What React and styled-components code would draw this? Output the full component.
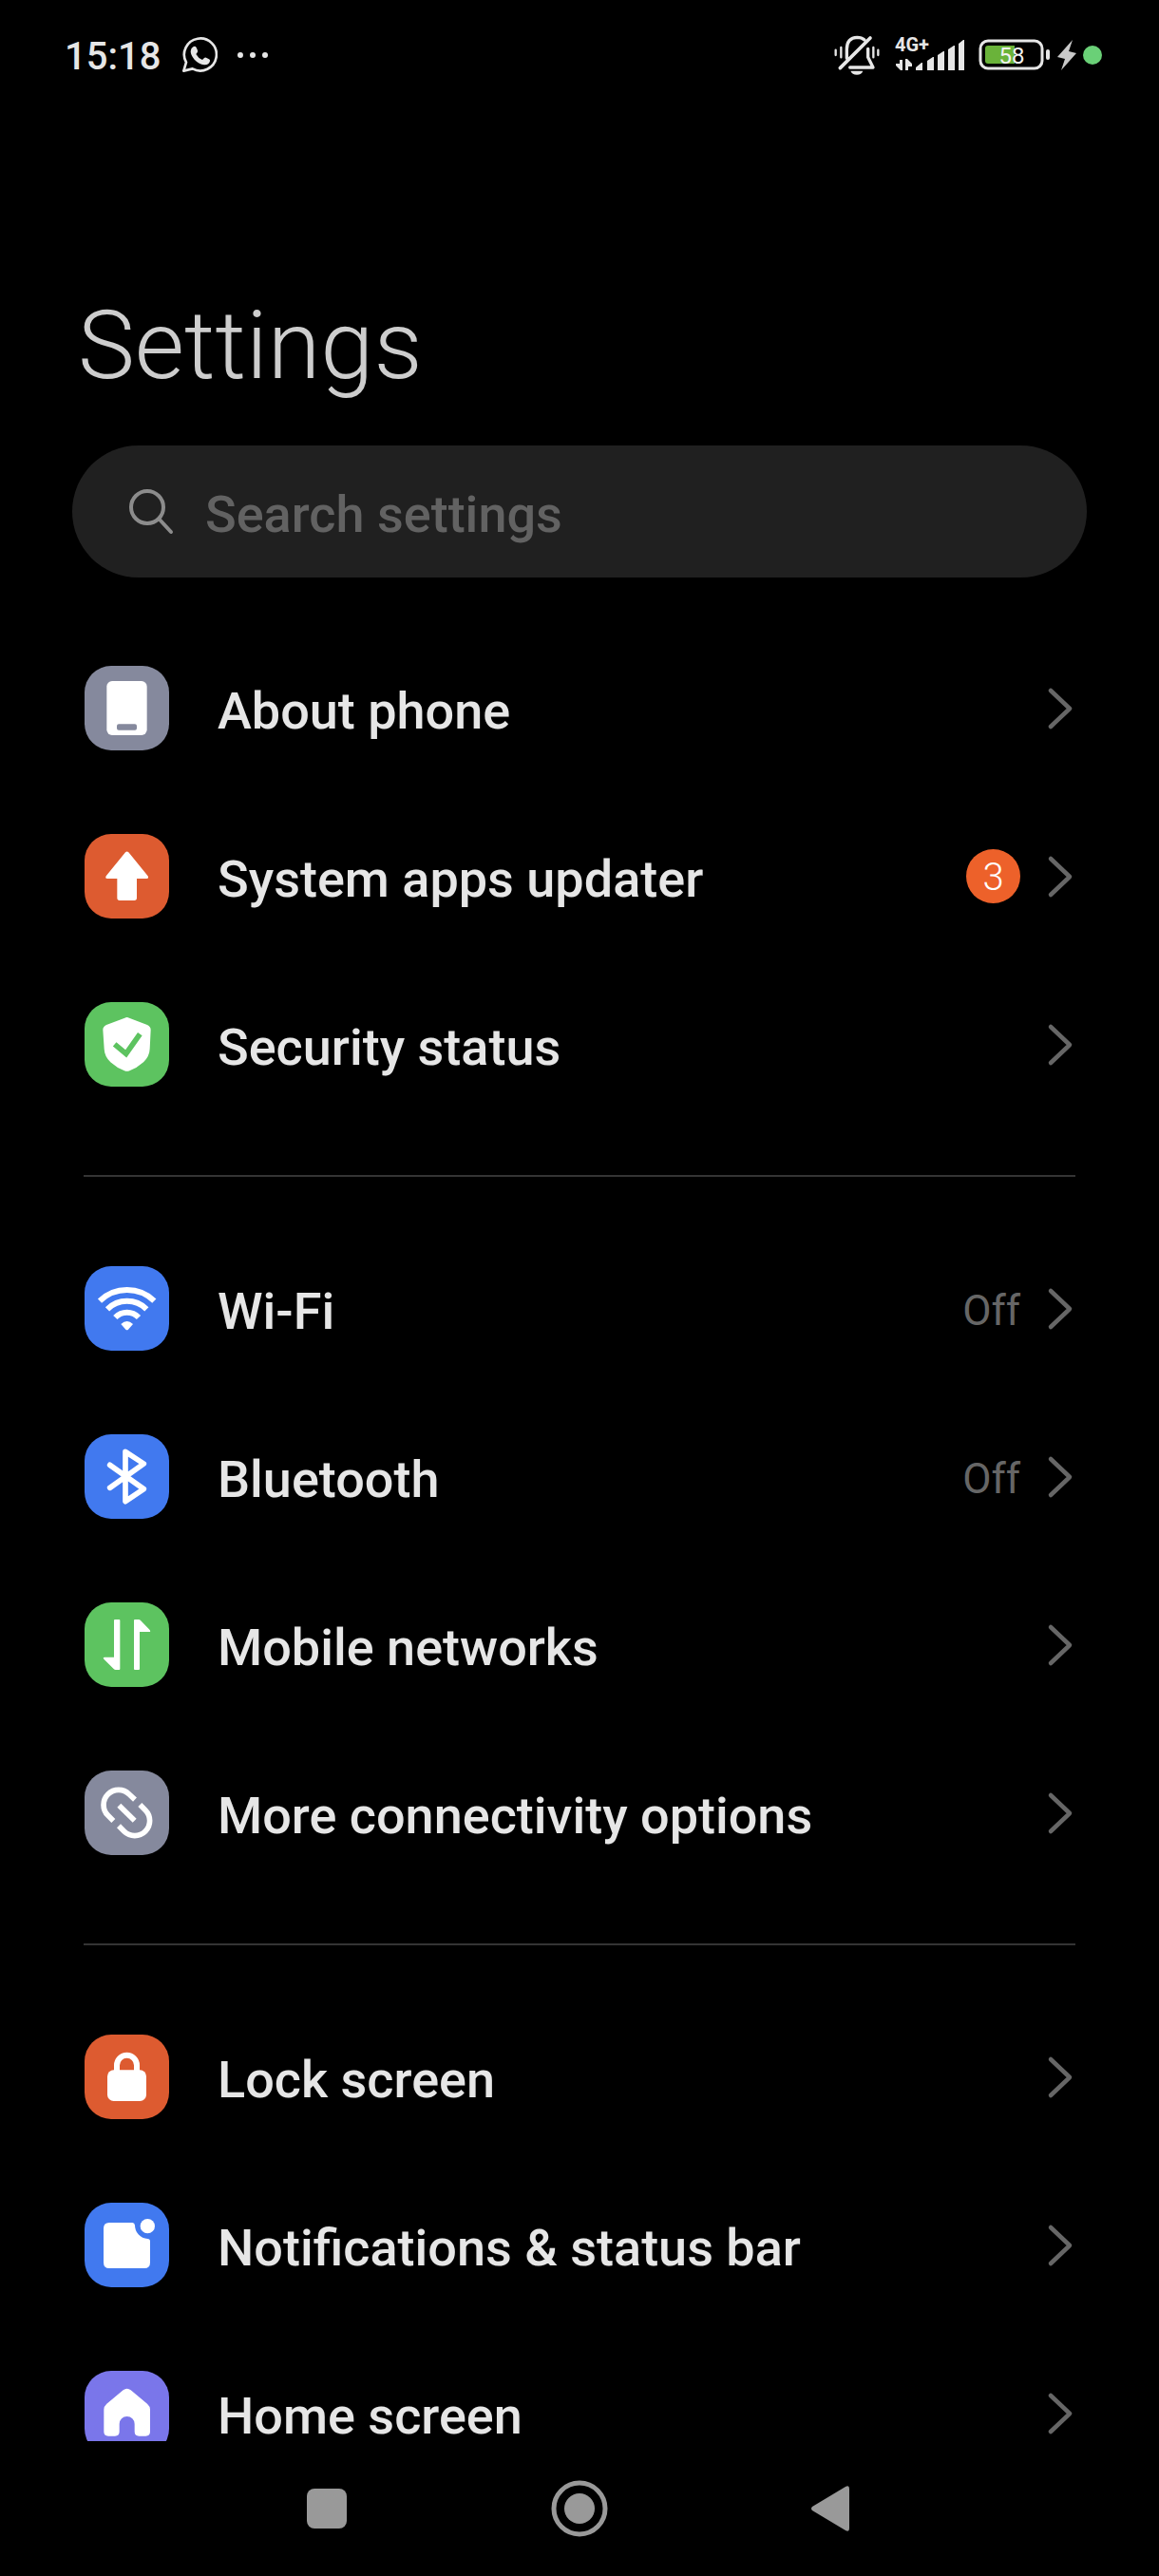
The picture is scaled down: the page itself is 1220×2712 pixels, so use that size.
import React from "react";
import styled, { createGlobalStyle } from "styled-components";

const GlobalStyle = createGlobalStyle`
  *, *::before, *::after { box-sizing: border-box; }
  body {
    margin: 0;
    background: #000;
    color: #e6e6e6;
    font-family: Roboto, "Noto Sans", sans-serif;
  }
`;

const colors = {
  grey: "#85899d",
  orange: "#dd5b30",
  green: "#5dc360",
  blue: "#4179ef",
  purple: "#7a76ea",
};

const Screen = styled.div`
  display: flex;
  flex-direction: column;
  height: 100vh;
  overflow: hidden;
`;

const StatusBar = styled.header`
  display: flex;
  justify-content: space-between;
  align-items: center;
  flex: none;
  height: 116px;
  padding: 0 60px 0 68px;
`;

const StatusGroup = styled.div`
  display: flex;
  align-items: center;
  gap: ${(p) => p.$gap}px;
`;

const Clock = styled.time`
  font-size: 40px;
  line-height: 48px;
  font-weight: 500;
  padding-top: 4px;
`;

const Glyph = styled.svg`
  display: block;
  flex: none;
  width: ${(p) => p.$w}px;
  height: ${(p) => p.$h}px;
`;

const Content = styled.main`
  flex: 1;
  min-height: 0;
  overflow: hidden;
`;

const Title = styled.h1`
  margin: 188px 82px 45px;
  font-size: 101px;
  line-height: 120px;
  font-weight: 300;
  color: #cdcdcd;
`;

const SearchBox = styled.label`
  display: flex;
  align-items: center;
  gap: 30px;
  height: 139px;
  margin: 0 76px 49px;
  padding: 0 58px;
  border-radius: 70px;
  background: #202020;
`;

const SearchInput = styled.input`
  flex: 1;
  min-width: 0;
  height: 100%;
  padding: 6px 0 0;
  border: 0;
  outline: 0;
  background: none;
  color: #e6e6e6;
  font-family: inherit;
  font-size: 54px;
  font-weight: 500;
  &::placeholder {
    color: #626262;
    opacity: 1;
  }
`;

const Group = styled.ul`
  list-style: none;
  margin: 0 88px;
  padding: 0;
  & + & {
    margin-top: 49px;
    padding-top: 50px;
    border-top: 2px solid #343434;
  }
`;

const Row = styled.a`
  display: flex;
  align-items: center;
  height: 177px;
  padding-left: 1px;
  color: inherit;
  text-decoration: none;
`;

const Tile = styled.span`
  flex: none;
  width: 89px;
  height: 89px;
  border-radius: 28px;
  background: ${(p) => p.$color};
`;

const Label = styled.span`
  flex: 1;
  padding: 6px 0 0 51px;
  font-size: 54px;
  line-height: 64px;
  font-weight: 500;
`;

const Value = styled.span`
  padding-top: 4px;
  font-size: 44px;
  line-height: 54px;
  color: #666;
`;

const Badge = styled.span`
  display: flex;
  align-items: center;
  justify-content: center;
  width: 57px;
  height: 57px;
  border-radius: 50%;
  background: #ed612a;
  color: #fff;
  font-size: 40px;
  line-height: 48px;
  font-weight: 300;
  padding-top: 2px;
`;

const Chevron = styled.svg`
  flex: none;
  width: 30px;
  height: 48px;
  margin-left: 28px;
`;

const NavBar = styled.nav`
  display: grid;
  grid-template-columns: repeat(3, 266px);
  justify-content: center;
  flex: none;
  height: 142px;
`;

const NavButton = styled.button`
  display: flex;
  align-items: center;
  justify-content: center;
  padding: 0;
  border: 0;
  background: none;
`;

const icons = {
  phone: (
    <>
      <rect x="70" y="48" width="127" height="171" rx="17" fill="#fff" />
      <rect x="102" y="184" width="63" height="19" rx="6" fill={colors.grey} />
    </>
  ),
  update: (
    <path
      d="M129 58q5-5 10 0l61 75q4 8-4 8h-31v61q0 8-8 8h-46q-8 0-8-8v-61H72q-8 0-4-8z"
      fill="#fff"
    />
  ),
  shield: (
    <>
      <path
        d="M127 50q7-4 14 0l57 22q11 5 11 16l-3 60q-1 24-20 42-20 18-44 27-8 3-16 0-24-9-44-27-19-18-20-42l-4-60q0-11 11-16z"
        fill="#fff"
      />
      <path
        d="M95 133l36 30 44-62"
        fill="none"
        stroke={colors.green}
        strokeWidth="17"
      />
    </>
  ),
  wifi: (
    <>
      <g fill="none" stroke="#fff" strokeWidth="18">
        <path d="M48 110a124 124 0 0 1 172 0" />
        <path d="M72 136a88 88 0 0 1 124 0" />
        <path d="M97 162a52 52 0 0 1 74 0" />
      </g>
      <path d="M115 183q19-18 38 0l-15 17q-4 4-8 0z" fill="#fff" />
    </>
  ),
  bluetooth: (
    <path
      d="M80 97l107 76-58 39V55l58 38-107 76"
      fill="none"
      stroke="#fff"
      strokeWidth="17"
      strokeLinecap="round"
      strokeLinejoin="round"
    />
  ),
  network: (
    <g fill="#fff">
      <path d="M96 54h13q3 0 3 3v153q0 3-3 3H98q-3 0-6-3l-31-31q-4-6 2-6h30V57q0-3 3-3z" />
      <path d="M171 213h-12q-3 0-3-3V57q0-3 3-3h12q3 0 6 3l29 30q4 6-2 6h-30v117q0 3-3 3z" />
    </g>
  ),
  link: (
    <g fill="none" stroke="#fff" strokeWidth="17">
      <path d="M91 159l-17-17a47 47 0 0 1 67-67l18 17" />
      <path d="M175 108l17 17a47 47 0 0 1-67 67l-17-17" />
      <path d="M109 110l49 48" />
    </g>
  ),
  lock: (
    <>
      <rect x="72" y="112" width="123" height="98" rx="20" fill="#fff" />
      <path
        d="M102 118V97a31 31 0 0 1 63 0v21"
        fill="none"
        stroke="#fff"
        strokeWidth="18"
      />
    </>
  ),
  notification: (
    <g fill="#fff">
      <path d="M78 63h73q7 0 8 8a43 43 0 0 0 40 43q8 0 8 8v67q0 18-18 18H78q-18 0-18-18V81q0-18 18-18z" />
      <circle cx="199" cy="74" r="23" />
    </g>
  ),
  home: (
    <path
      d="M122 61q12-9 24 0l52 43q9 8 9 18v70q0 14-14 14h-21q-14 0-14-14v-24a24 24 0 0 0-48 0v24q0 14-14 14H75q-14 0-14-14v-70q0-10 9-18z"
      fill="#fff"
    />
  ),
};

const groups = [
  [
    { label: "About phone", icon: "phone", color: "grey" },
    { label: "System apps updater", icon: "update", color: "orange", badge: 3 },
    { label: "Security status", icon: "shield", color: "green" },
  ],
  [
    { label: "Wi-Fi", icon: "wifi", color: "blue", value: "Off" },
    { label: "Bluetooth", icon: "bluetooth", color: "blue", value: "Off" },
    { label: "Mobile networks", icon: "network", color: "green" },
    { label: "More connectivity options", icon: "link", color: "grey" },
  ],
  [
    { label: "Lock screen", icon: "lock", color: "orange" },
    { label: "Notifications & status bar", icon: "notification", color: "blue" },
    { label: "Home screen", icon: "home", color: "purple" },
  ],
];

function SettingRow({ label, icon, color, value, badge }) {
  return (
    <li>
      <Row href="#">
        <Tile $color={colors[color]}>
          <Glyph $w={89} $h={89} viewBox="0 0 267 267" aria-hidden="true">
            {icons[icon]}
          </Glyph>
        </Tile>
        <Label>{label}</Label>
        {value && <Value>{value}</Value>}
        {badge && <Badge>{badge}</Badge>}
        <Chevron viewBox="0 0 30 48" aria-hidden="true">
          <path
            d="M4 5l20 19L4 43"
            fill="none"
            stroke="#666"
            strokeWidth="4.5"
            strokeLinecap="round"
            strokeLinejoin="round"
          />
        </Chevron>
      </Row>
    </li>
  );
}

function StatusLeft() {
  return (
    <StatusGroup $gap={22}>
      <Clock>15:18</Clock>
      <StatusGroup $gap={20}>
        <Glyph $w={38} $h={38} viewBox="0 0 114 114" role="img" aria-label="WhatsApp">
          <path
            d="M7 107l8-27a51 51 0 1 1 20 20z"
            fill="none"
            stroke="#e6e6e6"
            strokeWidth="8"
            strokeLinejoin="round"
          />
          <path
            d="M37 31q6-4 10 2l4 9q1 4-1 7l-4 5q7 13 20 18l6-6q3-3 6-1l9 5q4 2 3 6-3 13-18 12-18-3-31-17-12-14-12-26 1-10 8-14z"
            fill="#e6e6e6"
          />
        </Glyph>
        <Glyph $w={34} $h={8} viewBox="0 0 34 8" aria-hidden="true">
          <g fill="#e6e6e6">
            <circle cx="4" cy="4" r="3" />
            <circle cx="17" cy="4" r="3" />
            <circle cx="30" cy="4" r="3" />
          </g>
        </Glyph>
      </StatusGroup>
    </StatusGroup>
  );
}

function StatusRight() {
  return (
    <StatusGroup $gap={6}>
      <StatusGroup $gap={15}>
        <Glyph $w={49} $h={42} viewBox="55 51 147 126" role="img" aria-label="Muted">
          <g fill="none" stroke="#e6e6e6" strokeWidth="10" strokeLinecap="round">
            <path d="M95 124V96q0-37 33-38 14 0 23 8" />
            <path d="M74 155L169 60" strokeWidth="11" />
            <path d="M162 94v27l16 32h-73" strokeLinejoin="round" />
            <path d="M77 90v31M179 90v31" strokeWidth="7" />
            <path d="M60 98v16M194 98v16" strokeWidth="7" />
          </g>
          <path d="M107 164h39q-4 12-19 12t-20-12z" fill="#e6e6e6" />
        </Glyph>
        <Glyph $w={73} $h={48} viewBox="0 -4 73 48" role="img" aria-label="4G+ signal">
          <g fill="#e6e6e6">
            <text x="0" y="16" fontSize="20" fontWeight="700">
              4G+
            </text>
            <path d="M5 25h3v11H6l-5-5v-2h4zM11 24h2l5 5v3h-4v4h-3z" />
            <path d="M22 36v-3l6-5h1v8zM34 36V26l6-4h1v14zM45 36V20l6-4h1v20zM56 36V14l6-4h1v26zM67 36V8l5-4h1v32z" />
          </g>
        </Glyph>
        <Glyph $w={76} $h={34} viewBox="0 0 76 34" role="img" aria-label="Battery 58 percent">
          <rect
            x="2" y="2" width="65" height="29" rx="8"
            fill="none" stroke="#e6e6e6" strokeWidth="3"
          />
          <path d="M10 7h28v19H10q-3 0-3-3V10q0-3 3-3z" fill="#6ab33a" />
          <rect x="71" y="11" width="4" height="11" rx="2" fill="#e6e6e6" />
          <text x="35" y="26" fontSize="24" fontWeight="400" textAnchor="middle" fill="#f2f2f2">
            58
          </text>
        </Glyph>
      </StatusGroup>
      <Glyph $w={22} $h={34} viewBox="0 0 22 34" role="img" aria-label="Charging">
        <path d="M17 1L1 19l8 2-4 12 16-18-8-2z" fill="#c9c9c9" />
      </Glyph>
      <Glyph $w={20} $h={20} viewBox="0 0 20 20" role="img" aria-label="Privacy indicator">
        <circle cx="10" cy="10" r="10" fill="#6ad077" />
      </Glyph>
    </StatusGroup>
  );
}

export default function App() {
  return (
    <Screen>
      <GlobalStyle />
      <StatusBar>
        <StatusLeft />
        <StatusRight />
      </StatusBar>
      <Content>
        <Title>Settings</Title>
        <SearchBox>
          <Glyph $w={52} $h={52} viewBox="0 0 52 52" aria-hidden="true">
            <g fill="none" stroke="#8c8c8c" strokeWidth="4" strokeLinecap="round">
              <circle cx="21" cy="21" r="17" />
              <path d="M34 34l12 13" />
            </g>
          </Glyph>
          <SearchInput type="search" placeholder="Search settings" aria-label="Search settings" />
        </SearchBox>
        {groups.map((rows, i) => (
          <Group key={i}>
            {rows.map((row) => (
              <SettingRow key={row.label} {...row} />
            ))}
          </Group>
        ))}
      </Content>
      <NavBar>
        <NavButton aria-label="Recent apps">
          <Glyph $w={42} $h={42} viewBox="0 0 42 42" aria-hidden="true">
            <rect width="42" height="42" rx="8" fill="#999" />
          </Glyph>
        </NavButton>
        <NavButton aria-label="Home">
          <Glyph $w={60} $h={60} viewBox="0 0 60 60" aria-hidden="true">
            <circle cx="30" cy="30" r="27" fill="none" stroke="#999" strokeWidth="5" />
            <circle cx="30" cy="30" r="16" fill="#999" />
          </Glyph>
        </NavButton>
        <NavButton aria-label="Back">
          <Glyph $w={44} $h={50} viewBox="0 0 44 50" aria-hidden="true">
            <path d="M1 23L36 2q4-2 4 2v42q0 4-4 2L1 27q-2-2 0-4z" fill="#999" />
          </Glyph>
        </NavButton>
      </NavBar>
    </Screen>
  );
}
